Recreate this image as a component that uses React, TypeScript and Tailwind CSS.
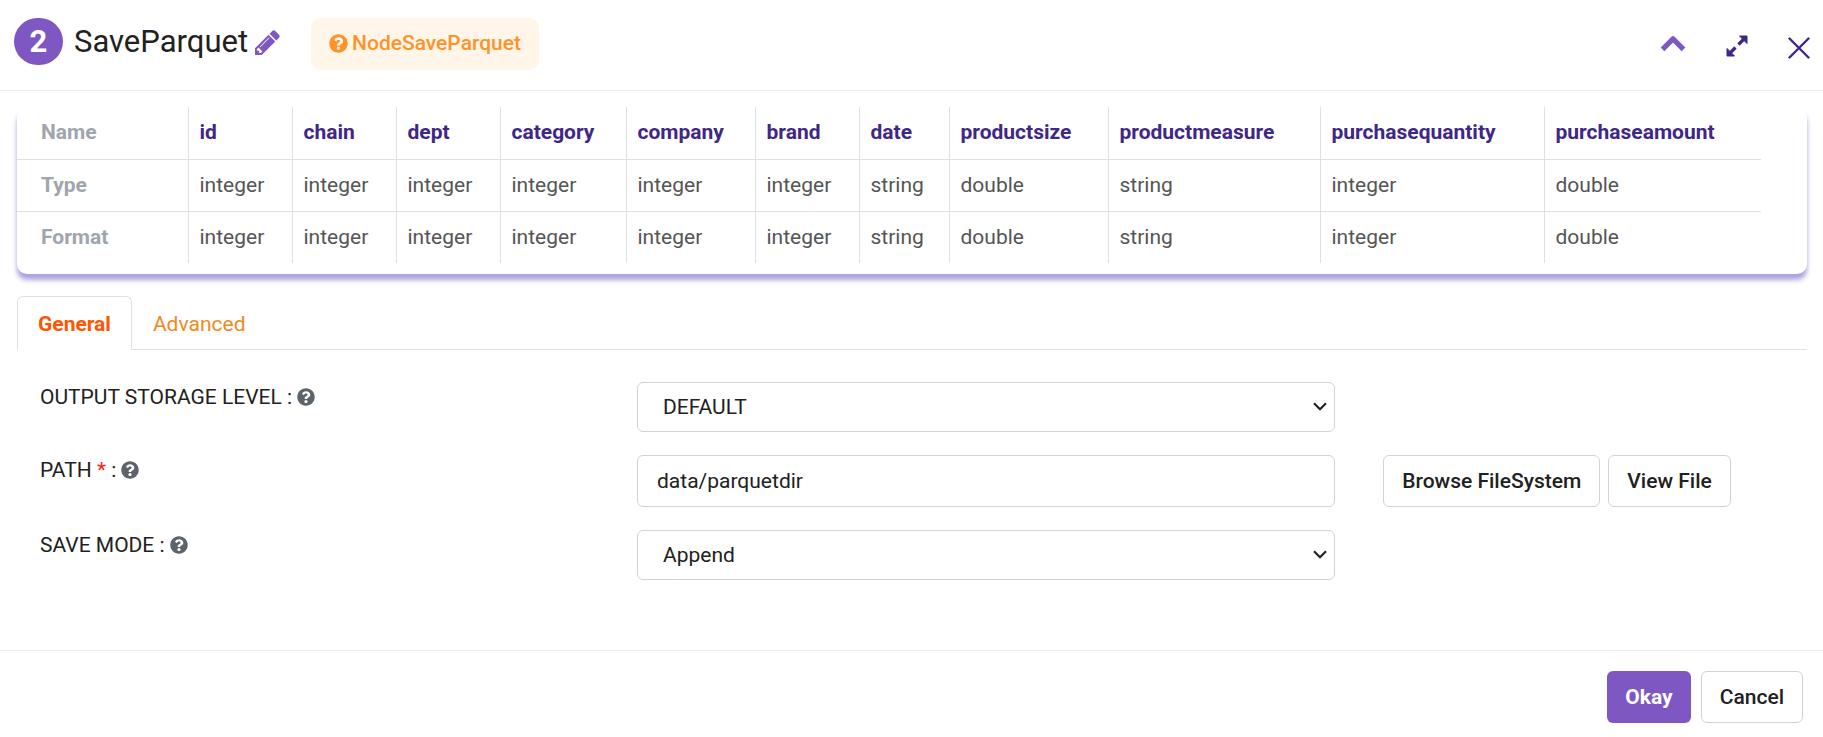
import { useState } from "react";
import type { ReactNode } from "react";
import { FaQuestionCircle } from "react-icons/fa";

const columns = [
  { name: "id", type: "integer", width: 104 },
  { name: "chain", type: "integer", width: 104 },
  { name: "dept", type: "integer", width: 104 },
  { name: "category", type: "integer", width: 126 },
  { name: "company", type: "integer", width: 129 },
  { name: "brand", type: "integer", width: 104 },
  { name: "date", type: "string", width: 90 },
  { name: "productsize", type: "double", width: 159 },
  { name: "productmeasure", type: "string", width: 212 },
  { name: "purchasequantity", type: "integer", width: 224 },
  { name: "purchaseamount", type: "double", width: 217 },
];

const rowHead = "h-[52px] pl-6 text-left font-bold text-[#9fa5ad]";
const cell = "border-l border-[#dee2e6] px-[11px] text-left";
const outlineButton =
  "h-[52px] rounded-md border border-[#ced4da] bg-white px-[18px] font-medium text-[#212121]";

function PencilIcon() {
  return (
    <svg viewBox="0 0 1536 1536" className="size-[25px]" fill="currentColor" aria-hidden="true">
      <path d="M363 1408l91-91-235-235-91 91v107h128v128h107zM886 480q0-22-22-22-10 0-17 7l-542 542q-7 7-7 17 0 22 22 22 10 0 17-7l542-542q7-7 7-17zM832 288l416 416-832 832H0v-416zM1515 384q0 53-37 90l-166 166-416-416 166-165q36-38 90-38 53 0 91 38l235 234q37 39 37 91z" />
    </svg>
  );
}

function ChevronUpIcon() {
  return (
    <svg viewBox="0 0 26 18" className="h-[18px] w-[26px]" fill="none" stroke="currentColor" strokeWidth="5.2" strokeLinejoin="round" aria-hidden="true">
      <path d="M2.500 14.300 13 3.800l10.500 10.500" />
    </svg>
  );
}

function ExpandIcon() {
  return (
    <svg viewBox="0 0 22 22" className="size-[22px]" fill="currentColor" stroke="currentColor" aria-hidden="true">
      <path d="M13.500 1H21v7.500zM1 13.500V21h7.500z" strokeWidth="1" strokeLinejoin="round" />
      <path d="m12.500 9.500 5-5M4.500 17.500l5-5" strokeWidth="3.2" />
    </svg>
  );
}

function CloseIcon() {
  return (
    <svg viewBox="0 0 22 22" className="size-[22px]" fill="none" stroke="currentColor" strokeWidth="2.4" strokeLinecap="round" aria-hidden="true">
      <path d="m1.500 1.500 19 19M20.500 1.500l-19 19" />
    </svg>
  );
}

function FieldLabel({ id, text, required }: { id: string; text: string; required?: boolean }) {
  return (
    <label htmlFor={id} className="col-span-4 flex h-[30px] items-center gap-[5px] px-6">
      <span>
        {text} {required && <span className="text-[#ff1a1a]">* </span>}:
      </span>
      <FaQuestionCircle className="size-[18px] text-[#5c636a]" />
    </label>
  );
}

function Select({ id, children }: { id: string; children: ReactNode }) {
  return (
    <div className="relative">
      <select id={id} className="block h-[50px] w-full appearance-none rounded-md border border-[#ced4da] bg-white px-[25px]">
        {children}
      </select>
      <svg viewBox="0 0 14 9" className="pointer-events-none absolute top-5 right-2 h-[9px] w-[14px]" fill="none" stroke="currentColor" strokeWidth="2.2" aria-hidden="true">
        <path d="m1 1.300 6 6 6-6" />
      </svg>
    </div>
  );
}

export default function App() {
  const [tab, setTab] = useState("General");
  return (
    <div className="bg-white font-['Roboto',sans-serif] text-[21px] leading-[30px] text-[#212121]">
      <header className="flex h-[91px] items-start justify-between border-b border-[#e9ecef] pt-[18px] pr-[13px] pl-[14px]">
        <div className="flex items-start">
          <span className="flex h-[47px] w-[49px] items-center justify-center rounded-full bg-[#7e57c2] text-[31px] font-bold text-white">
            2
          </span>
          <h1 className="ml-[11px] text-[31px] leading-[47px]">SaveParquet</h1>
          <button type="button" aria-label="Rename" className="mt-3 ml-[7px] text-[#7e57c2]">
            <PencilIcon />
          </button>
          <a href="#help" className="ml-[31px] flex h-[52px] items-center gap-1 rounded-[10px] bg-[#fff6e9] px-[18px] pb-[2px] font-medium text-[#ff9228]">
            <FaQuestionCircle className="size-[19px]" />
            NodeSaveParquet
          </a>
        </div>
        <div className="mt-[17px] flex items-start gap-10 text-[#3f2787]">
          <button type="button" aria-label="Collapse" className="text-[#7e57c2]">
            <ChevronUpIcon />
          </button>
          <button type="button" aria-label="Expand">
            <ExpandIcon />
          </button>
          <button type="button" aria-label="Close" className="pt-[2px]">
            <CloseIcon />
          </button>
        </div>
      </header>

      <main className="px-4 pt-4">
        <section className="ml-px rounded-[10px] pb-[11px] shadow-[0_6px_5px_#aca4db]">
          <table className="table-fixed border-collapse text-[#555]">
            <colgroup>
              <col style={{ width: 171 }} />
              {columns.map((c) => (
                <col key={c.name} style={{ width: c.width }} />
              ))}
            </colgroup>
            <thead>
              <tr>
                <th scope="row" className={`${rowHead} pb-[2px]`}>Name</th>
                {columns.map((c) => (
                  <th key={c.name} scope="col" className={`${cell} pb-[2px] font-bold text-[#3f2787]`}>{c.name}</th>
                ))}
              </tr>
            </thead>
            <tbody>
              {["Type", "Format"].map((label) => (
                <tr key={label} className="border-t border-[#dee2e6]">
                  <th scope="row" className={rowHead}>{label}</th>
                  {columns.map((c) => (
                    <td key={c.name} className={cell}>{c.type}</td>
                  ))}
                </tr>
              ))}
            </tbody>
          </table>
        </section>

        <nav className="mt-[22px] ml-px flex border-b border-[#dee2e6]" role="tablist">
          {["General", "Advanced"].map((t) => (
            <button
              key={t}
              type="button"
              role="tab"
              aria-selected={tab === t}
              onClick={() => setTab(t)}
              className={
                tab === t
                  ? "-mb-px h-[54px] rounded-t-md border border-b-0 border-[#dee2e6] bg-white px-5 font-bold text-[#ff5500]"
                  : "h-[53px] px-[21px] pt-[2px] text-[#ee8a1d]"
              }
            >
              {t}
            </button>
          ))}
        </nav>

        <form className="grid grid-cols-12 gap-y-[23px] pt-8">
          <FieldLabel id="level" text="OUTPUT STORAGE LEVEL" />
          <div className="col-span-5 px-6">
            <Select id="level">
              <option>DEFAULT</option>
            </Select>
          </div>
          <div className="col-span-3" />

          <FieldLabel id="path" text="PATH" required />
          <div className="col-span-5 px-6">
            <input id="path" defaultValue="data/parquetdir" className="block h-[52px] w-full rounded-md border border-[#ced4da] bg-white px-[19px]" />
          </div>
          <div className="col-span-3 flex gap-2 pl-6 whitespace-nowrap">
            <button type="button" className={outlineButton}>Browse FileSystem</button>
            <button type="button" className={outlineButton}>View File</button>
          </div>

          <FieldLabel id="mode" text="SAVE MODE" />
          <div className="col-span-5 px-6">
            <Select id="mode">
              <option>Append</option>
            </Select>
          </div>
        </form>
      </main>

      <footer className="mt-[70px] flex justify-end gap-[10px] border-t border-[#e9ecef] px-5 pt-5 pb-[14px]">
        <button type="button" className="h-[52px] rounded-md bg-[#7e57c2] px-[18px] font-bold text-white">Okay</button>
        <button type="button" className={outlineButton}>Cancel</button>
      </footer>
    </div>
  );
}
